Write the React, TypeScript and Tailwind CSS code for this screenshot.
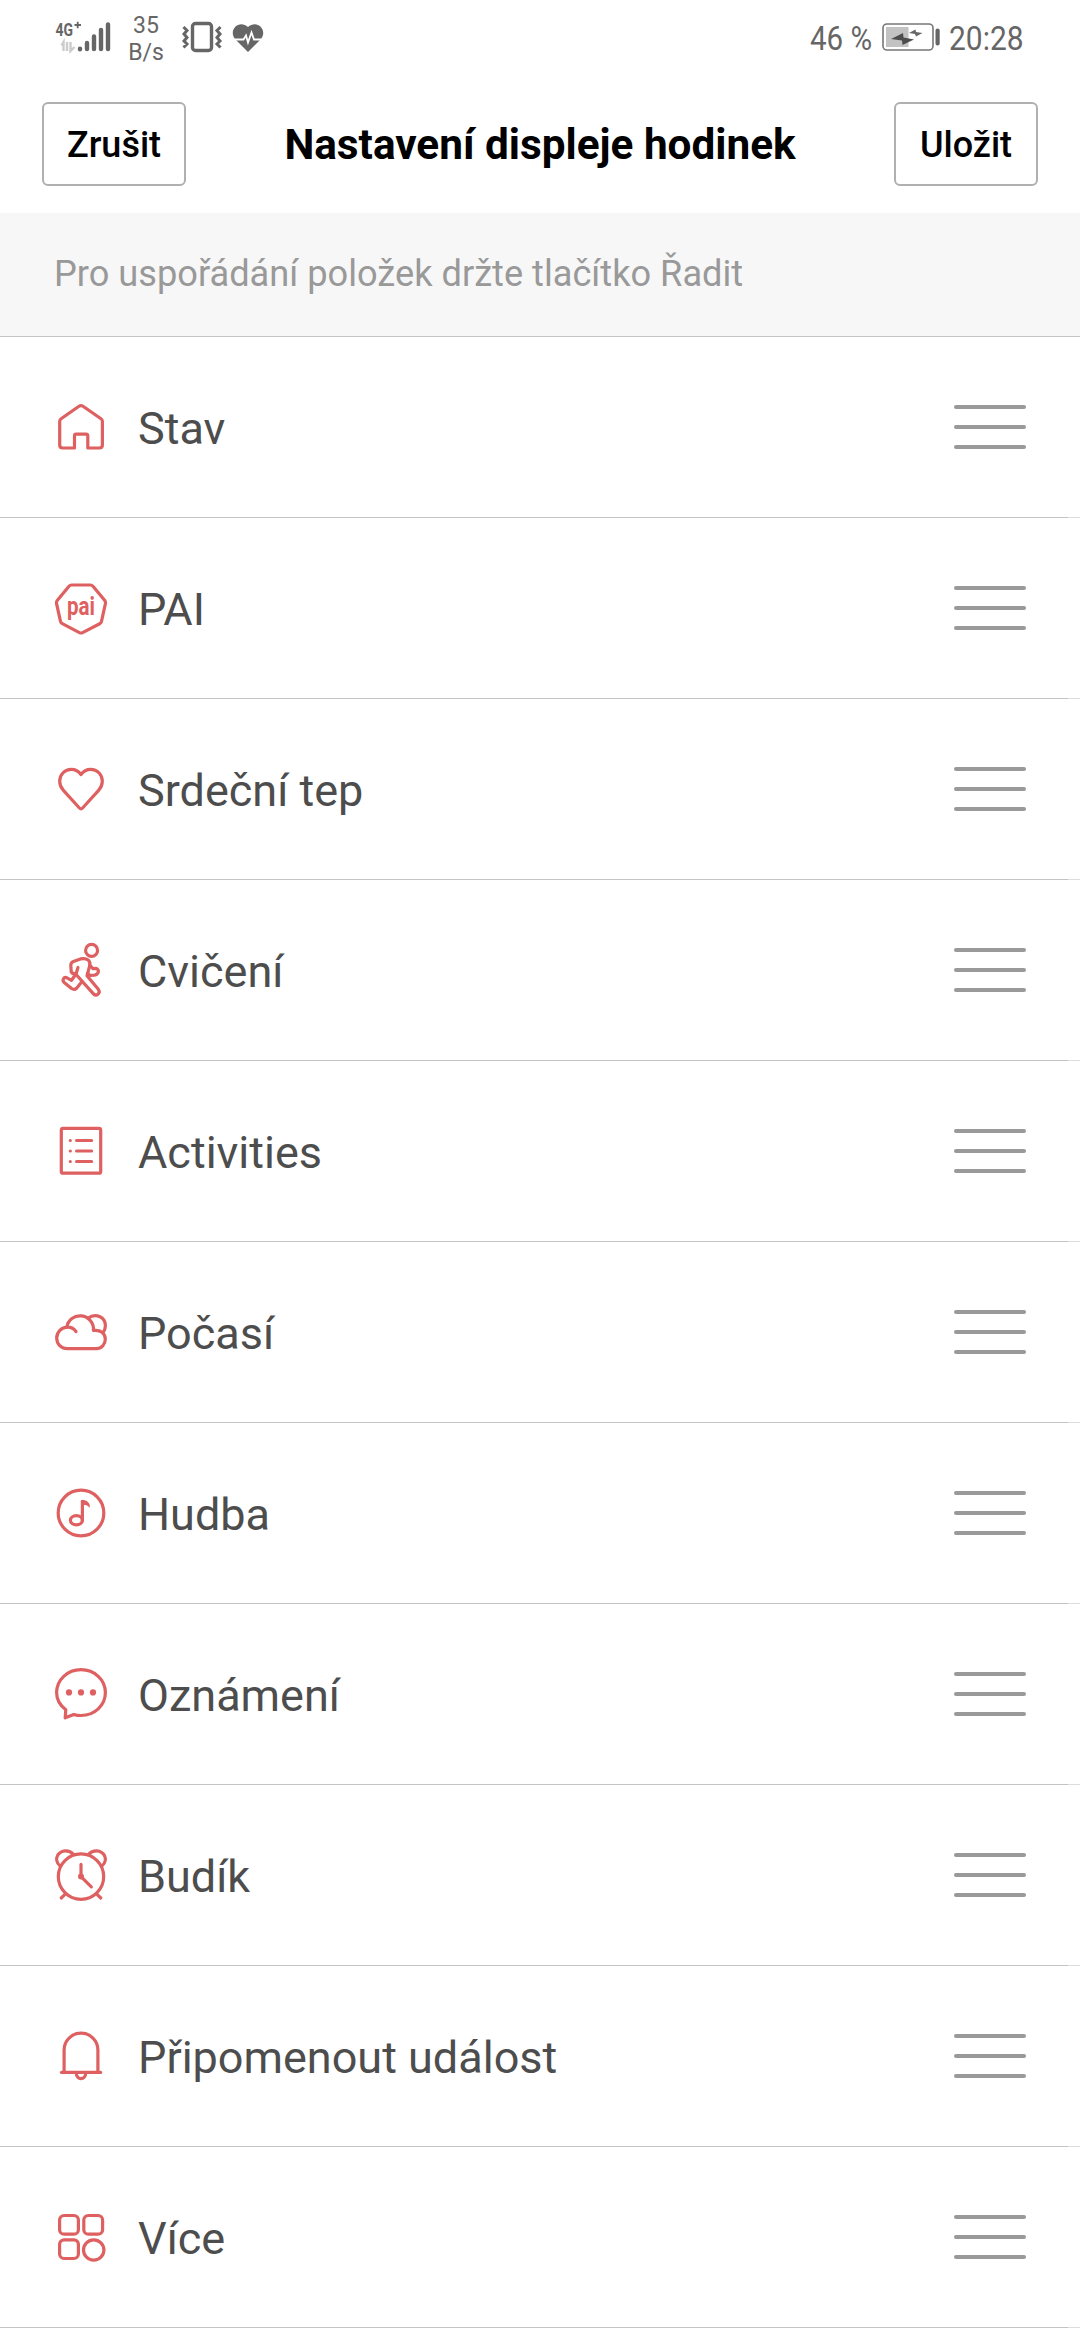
import { FC, ReactNode } from 'react';

interface WatchItem {
    label: string;
    icon: ReactNode;
}

interface HeaderButtonProps {
    label: string;
}

// All item icons are drawn on a 60x60 grid
const items: WatchItem[] = [
    {
        label: 'Stav',
        icon: (
            <path d="M30 8.6 Q31 8.6 32 9.3 L50 21.8 Q51.4 22.8 51.4 24.5 V48 Q51.4 51 48.4 51 H36.8 V39 Q36.8 37.2 35 37.2 H25.2 Q23.5 37.2 23.5 39 V51 H11.7 Q8.7 51 8.7 48 V24.5 Q8.7 22.8 10.1 21.8 L28 9.3 Q29 8.6 30 8.6 Z" />
        ),
    },
    {
        label: 'PAI',
        icon: (
            <>
                <path d="M20.6 7 H39.4 Q41 7 42 8.2 L53.8 22.6 Q54.8 23.8 54.5 25.3 L50.5 43.4 Q50.1 45 48.7 45.7 L31.6 54.6 Q30 55.4 28.4 54.6 L11.3 45.7 Q9.9 45 9.5 43.4 L5.5 25.3 Q5.2 23.8 6.2 22.6 L18 8.2 Q19 7 20.6 7 Z" />
                <text x="16" y="36.7" fontSize="25" textLength="28" lengthAdjust="spacingAndGlyphs" fill="currentColor" stroke="none" fontWeight="700">pai</text>
            </>
        ),
    },
    {
        label: 'Srdeční tep',
        icon: (
            <path d="M30 15.6 C27.5 12 24 10.3 20.3 10.3 C13.8 10.3 8.7 15.5 8.7 22.3 C8.7 26 10 28.8 12.4 31.4 L28.4 49 Q30 50.7 31.6 49 L47.6 31.4 C50 28.8 51.3 26 51.3 22.3 C51.3 15.5 46.2 10.3 39.7 10.3 C36 10.3 32.5 12 30 15.6 Z" />
        ),
    },
    {
        label: 'Cvičení',
        icon: (
            <>
                <circle cx="40.6" cy="10.4" r="6" />
                <path d="M27 27.5 L25 34 L20.5 40.3 L15.5 37.6 Q13.5 36.8 12.4 38.9 Q11.4 41 13.2 42.4 L20.6 48.5 Q23.3 50.3 25.6 48.2 L31 41.5" />
                <path d="M25 33.5 Q21.5 34.5 20.2 31.5 L19.8 25 Q20 22.4 22.4 21.4 L29.5 18.9 Q34.5 17.8 37.4 20.2 Q39.8 22.6 38.5 26.5 L36 35.8 L47.5 49.6 Q49.3 52.4 46.8 54.3 Q44.2 56 42 53.4 L26 35.5" />
                <path d="M39.4 25.8 L42 28.6 L45.3 28.4 Q47.4 29.3 47.4 31.6 Q46.8 34.5 43.4 35.1 L39 35.3 L36.4 33.5" />
            </>
        ),
    },
    {
        label: 'Activities',
        icon: (
            <>
                <rect x="10.3" y="7.4" width="39.4" height="44.8" rx="1.8" />
                <path d="M25.6 19.5 H40.6 M25.6 30 H40.6 M25.6 40.5 H40.6" />
                <path d="M19.3 19.5 h.01 M19.3 30 h.01 M19.3 40.5 h.01" />
            </>
        ),
    },
    {
        label: 'Počasí',
        icon: (
            <>
                <path d="M15.8 25.3 A13.4 13.4 0 0 1 42.4 28.5 C49.5 27.5 54.3 31.5 54.3 37.3 C54.3 42.5 50.5 46.6 45.3 46.6 H16.5 C10.3 46.6 5.7 42 5.7 36 C5.7 30 10.5 25.2 16.5 25.2 C20 25.2 23.2 26.8 25 29.6" />
                <path d="M37 16.2 C44.5 10.5 54.4 15 54.4 23.6 C54.4 26.5 53.6 28.9 52 30.8" />
            </>
        ),
    },
    {
        label: 'Hudba',
        icon: (
            <>
                <circle cx="30" cy="30" r="22.8" />
                <ellipse cx="25.4" cy="37.3" rx="6" ry="4.6" />
                <path d="M31.4 37.5 V18.3" />
                <path d="M30 17 H33 C37 18 40 21 38.4 25 C37.5 22.5 35 21.8 32.5 21.8 Z" fill="currentColor" stroke="none" />
            </>
        ),
    },
    {
        label: 'Oznámení',
        icon: (
            <>
                <path d="M30 5.7 C43.5 5.7 54.4 15.7 54.4 28.6 C54.4 41.5 43.5 51.5 30 51.5 C27.5 51.5 25 51.1 22.8 50.4 L14.2 53.8 L14.8 45.7 C9 41.5 5.6 35.5 5.6 28.6 C5.6 15.7 16.5 5.7 30 5.7 Z" />
                <g fill="currentColor" stroke="none">
                    <circle cx="18" cy="28.4" r="3.1" />
                    <circle cx="30" cy="28.4" r="3.1" />
                    <circle cx="42" cy="28.4" r="3.1" />
                </g>
            </>
        ),
    },
    {
        label: 'Budík',
        icon: (
            <>
                <circle cx="30" cy="31.6" r="22.7" />
                <path d="M9 20.8 C5.5 18 4.8 13.5 6.8 10 C10.2 4.8 18 4.2 22.4 9.4" />
                <path d="M51 20.8 C54.5 18 55.2 13.5 53.2 10 C49.8 4.8 42 4.2 37.6 9.4" />
                <path d="M14 49.3 L10.2 53 M46 49.3 L49.8 53" />
                <path d="M30 19.4 V31.6 L40.3 41.8" />
                <circle cx="30" cy="31.6" r="3" fill="currentColor" stroke="none" />
            </>
        ),
    },
    {
        label: 'Připomenout událost',
        icon: (
            <>
                <path d="M13.1 46.4 V24 A16.9 16.9 0 0 1 46.9 24 V46.4" />
                <path d="M10.5 46.4 H49.6" />
                <path d="M25.3 47 C25.3 54.6 34.7 54.6 34.7 47" />
            </>
        ),
    },
    {
        label: 'Více',
        icon: (
            <>
                <rect x="8.6" y="8.5" width="18.8" height="18.7" rx="4.5" />
                <rect x="32.8" y="8.5" width="18.8" height="18.7" rx="4.5" />
                <rect x="8.6" y="32.8" width="18.8" height="18.7" rx="4.5" />
                <circle cx="42.7" cy="43" r="10.2" />
            </>
        ),
    },
];

const SignalIcon = () => (
    <svg className="w-[56px] h-[38px] shrink-0 overflow-visible" viewBox="0 -4 56 38" fill="none">
        <text x="0.5" y="15.5" fontSize="19" fontWeight="700" fill="#666666" textLength="17.5" lengthAdjust="spacingAndGlyphs">4G</text>
        <path d="M19.5 5 H26 M22.7 1.8 V8.2" stroke="#666666" strokeWidth="1.8" />
        <path d="M8.5 31 V22 L6.5 25.5 M12 22 V31 M15.5 22 V31 L19.5 27" stroke="#cccccc" strokeWidth="2.4" />
        <g stroke="#666666" strokeWidth="4.4" strokeLinecap="round">
            <path d="M25 28.6 V29.2 M32 23 V29 M39 16.5 V29 M46 10 V29 M53 4.5 V29" />
        </g>
    </svg>
);

const VibrateIcon = () => (
    <svg className="w-[42px] h-[34px] shrink-0" viewBox="0 0 42 34" fill="none" stroke="#666666">
        <rect x="11.5" y="3.5" width="19" height="27" rx="3" strokeWidth="3.4" />
        <path d="M2.5 7 L6 10.5 L3 14 L6 17.5 L3 21 L6 24 L2.5 27.5 M39.5 7 L36 10.5 L39 14 L36 17.5 L39 21 L36 24 L39.5 27.5" strokeWidth="3" />
    </svg>
);

const HeartRateIcon = () => (
    <svg className="w-[32px] h-[30px] shrink-0" viewBox="0 0 32 30" fill="none">
        <path d="M16 29 L3 16 C-4 7 7 -4 16 4 C25 -4 36 7 29 16 Z" fill="#666666" />
        <path d="M0 16.5 H11.5 L14 12.5 L16 19.5 L19.5 9.5 L22 16.5 H32" stroke="white" strokeWidth="1.8" />
    </svg>
);

const BatteryIcon = () => (
    <svg className="w-[58px] h-[28px] shrink-0" viewBox="0 0 58 28" fill="none">
        <rect x="1" y="1" width="50" height="26" rx="4" stroke="#777777" strokeWidth="1.6" />
        <rect x="4" y="4" width="22.5" height="20" fill="#c2c2c2" />
        <path d="M9 16 L21 10 L21.5 14.5 L32 16.5 L20.5 22 L20 17.5 Z" fill="#4d4d4d" />
        <path d="M27 10 L33.5 6.5 L34 9 L40.5 10 L34 13.5 L33 11 Z" fill="#666666" />
        <rect x="53.5" y="5.5" width="4.2" height="17" rx="2" fill="#666666" />
    </svg>
);

const StatusBar = () => (
    <div className="flex items-start h-[84px] pl-[55px] pr-[56px] text-[#666666]">
        <div className="pt-4">
            <SignalIcon />
        </div>
        <div className="w-[56px] ml-[7px] pt-[12px] text-center text-[23px] leading-[27px]">
            <div>35</div>
            <div>B/s</div>
        </div>
        <div className="pt-5 ml-[7px]">
            <VibrateIcon />
        </div>
        <div className="pt-[23px] ml-[9px]">
            <HeartRateIcon />
        </div>
        <div className="ml-auto w-[63px] pt-[18px] text-[34px] leading-10 whitespace-nowrap">
            <div className="origin-left scale-x-[0.87]">46 %</div>
        </div>
        <div className="pt-[23px] ml-[9px]">
            <BatteryIcon />
        </div>
        <div className="ml-[9px] w-[75px] pt-[18px] text-[34px] leading-10 whitespace-nowrap">
            <div className="origin-left scale-x-[0.88]">20:28</div>
        </div>
    </div>
);

const HeaderButton: FC<HeaderButtonProps> = ({ label }) => (
    <button className="w-[144px] h-[84px] pt-[2px] border-2 border-[#b0b0b0] rounded-[6px] text-[36px] font-medium text-black">
        {label}
    </button>
);

const DragHandle = () => (
    <div className="flex flex-col gap-4">
        <div className="w-[72px] h-1 rounded-full bg-[#999999]"></div>
        <div className="w-[72px] h-1 rounded-full bg-[#999999]"></div>
        <div className="w-[72px] h-1 rounded-full bg-[#999999]"></div>
    </div>
);

const ItemRow: FC<WatchItem> = ({ label, icon }) => (
    <div>
        <div className="flex items-center h-[180px] pl-[51px] pr-[54px]">
            <svg
                className="w-[60px] h-[60px] text-[#de6060]"
                viewBox="0 0 60 60"
                fill="none"
                stroke="currentColor"
                strokeWidth="3.2"
                strokeLinecap="round"
                strokeLinejoin="round"
            >
                {icon}
            </svg>
            <span className="flex-1 ml-[27px] pt-1 text-[45px] leading-[54px] text-[#4d4d4d]">{label}</span>
            <DragHandle />
        </div>
        <div className="flex h-px">
            <div className="flex-1 bg-[#c4c4c4]"></div>
            <div className="w-3 bg-[#dddddd]"></div>
        </div>
    </div>
);

export default function App() {
    return (
        <div className="w-[1080px] h-[2340px] overflow-hidden bg-white font-['Roboto',sans-serif]">
            <StatusBar />

            <header className="flex items-center justify-between h-[129px] px-[42px] pb-[9px]">
                <HeaderButton label="Zrušit" />
                <h1 className="pt-[2px] text-[42.3px] font-bold text-black">Nastavení displeje hodinek</h1>
                <HeaderButton label="Uložit" />
            </header>

            <div className="flex items-center h-[124px] px-[54px] bg-[#f7f7f7] border-b border-[#c4c4c4] text-[36.2px] text-[#999999]">
                Pro uspořádání položek držte tlačítko Řadit
            </div>

            {items.map((item) => (
                <ItemRow key={item.label} label={item.label} icon={item.icon} />
            ))}
        </div>
    );
}
